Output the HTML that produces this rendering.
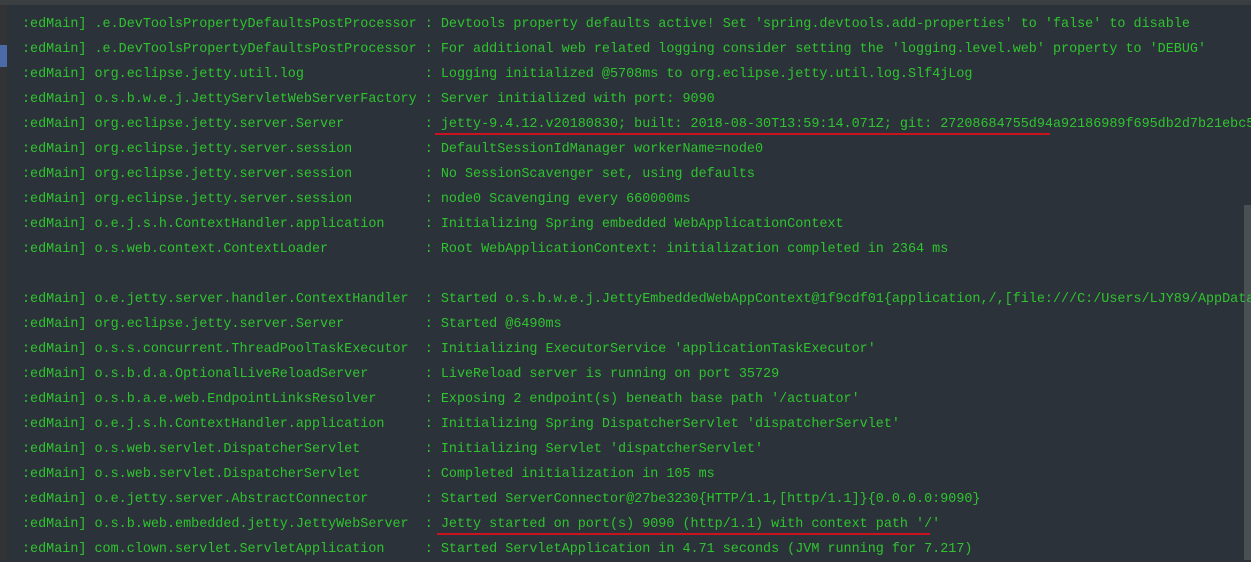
<!DOCTYPE html>
<html><head><style>
html,body{margin:0;padding:0;width:1251px;height:560px;overflow:hidden;background:#2b3239}
.top{position:absolute;left:0;top:0;width:1251px;height:5px;background:#3c3f41}
.gut{position:absolute;left:0;top:5px;width:7px;height:555px;background:#313335}
.mark{position:absolute;left:0;top:45px;width:7px;height:22px;background:#4a6aa8}
.sb{position:absolute;left:1244px;top:205px;width:7px;height:355px;background:#4a4f53}
pre{position:absolute;left:22px;top:12px;margin:0;font-family:"Liberation Mono","Noto Sans CJK SC",monospace;font-size:13.43px;line-height:25px;color:#2fc42f;white-space:pre}
.u{position:absolute;height:2px;background:#c8141e}
</style></head><body>
<div class="top"></div><div class="gut"></div><div class="mark"></div><div class="sb"></div>
<pre>:edMain] .e.DevToolsPropertyDefaultsPostProcessor : Devtools property defaults active! Set 'spring.devtools.add-properties' to 'false' to disable
:edMain] .e.DevToolsPropertyDefaultsPostProcessor : For additional web related logging consider setting the 'logging.level.web' property to 'DEBUG'
:edMain] org.eclipse.jetty.util.log               : Logging initialized @5708ms to org.eclipse.jetty.util.log.Slf4jLog
:edMain] o.s.b.w.e.j.JettyServletWebServerFactory : Server initialized with port: 9090
:edMain] org.eclipse.jetty.server.Server          : jetty-9.4.12.v20180830; built: 2018-08-30T13:59:14.071Z; git: 27208684755d94a92186989f695db2d7b21ebc51
:edMain] org.eclipse.jetty.server.session         : DefaultSessionIdManager workerName=node0
:edMain] org.eclipse.jetty.server.session         : No SessionScavenger set, using defaults
:edMain] org.eclipse.jetty.server.session         : node0 Scavenging every 660000ms
:edMain] o.e.j.s.h.ContextHandler.application     : Initializing Spring embedded WebApplicationContext
:edMain] o.s.web.context.ContextLoader            : Root WebApplicationContext: initialization completed in 2364 ms

:edMain] o.e.jetty.server.handler.ContextHandler  : Started o.s.b.w.e.j.JettyEmbeddedWebAppContext@1f9cdf01{application,/,[file:///C:/Users/LJY89/AppData/
:edMain] org.eclipse.jetty.server.Server          : Started @6490ms
:edMain] o.s.s.concurrent.ThreadPoolTaskExecutor  : Initializing ExecutorService 'applicationTaskExecutor'
:edMain] o.s.b.d.a.OptionalLiveReloadServer       : LiveReload server is running on port 35729
:edMain] o.s.b.a.e.web.EndpointLinksResolver      : Exposing 2 endpoint(s) beneath base path '/actuator'
:edMain] o.e.j.s.h.ContextHandler.application     : Initializing Spring DispatcherServlet 'dispatcherServlet'
:edMain] o.s.web.servlet.DispatcherServlet        : Initializing Servlet 'dispatcherServlet'
:edMain] o.s.web.servlet.DispatcherServlet        : Completed initialization in 105 ms
:edMain] o.e.jetty.server.AbstractConnector       : Started ServerConnector@27be3230{HTTP/1.1,[http/1.1]}{0.0.0.0:9090}
:edMain] o.s.b.web.embedded.jetty.JettyWebServer  : Jetty started on port(s) 9090 (http/1.1) with context path '/'
:edMain] com.clown.servlet.ServletApplication     : Started ServletApplication in 4.71 seconds (JVM running for 7.217)</pre>
<div class="u" style="left:435px;top:133px;width:615px"></div>
<div class="u" style="left:437px;top:533px;width:493px"></div>
</body></html>
